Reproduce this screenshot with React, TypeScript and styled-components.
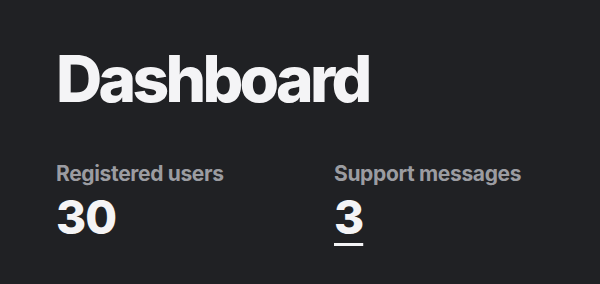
import React from "react";
import styled, { createGlobalStyle } from "styled-components";

const Global = createGlobalStyle`
  html, body { margin: 0; padding: 0; background: #202124; }
  body { font-family: Inter, "Noto Sans", sans-serif; }
`;

const Page = styled.main`
  width: 600px;
  height: 284px;
  box-sizing: border-box;
  background: #202124;
  padding: 40px 56px 0;
  display: flex;
  flex-direction: column;
`;

const Title = styled.h1`
  margin: 0;
  font-size: 64px;
  font-weight: 800;
  line-height: 78px;
  color: #f4f4f6;
  letter-spacing: -3.7px;
`;

const Stats = styled.div`
  display: grid;
  grid-template-columns: 278px 1fr;
  margin-top: 44px;
`;

const Stat = styled.div`
  display: flex;
  flex-direction: column;
`;

const Label = styled.div`
  font-size: 21px;
  font-weight: 700;
  line-height: 24px;
  color: #9b9ca1;
  letter-spacing: -0.35px;
`;

const Value = styled.a<{ $link?: boolean }>`
  margin-top: 4px;
  font-size: 46px;
  font-weight: 800;
  line-height: 54px;
  color: #f4f4f6;
  align-self: flex-start;
  letter-spacing: -1px;
  text-decoration: ${(p) => (p.$link ? "underline" : "none")};
  text-decoration-thickness: 3px;
  text-underline-offset: 9px;
`;

export default function App() {
  return (
    <>
      <Global />
      <Page>
        <Title>Dashboard</Title>
        <Stats>
          <Stat>
            <Label>Registered users</Label>
            <Value as="span">30</Value>
          </Stat>
          <Stat>
            <Label>Support messages</Label>
            <Value $link>3</Value>
          </Stat>
        </Stats>
      </Page>
    </>
  );
}
